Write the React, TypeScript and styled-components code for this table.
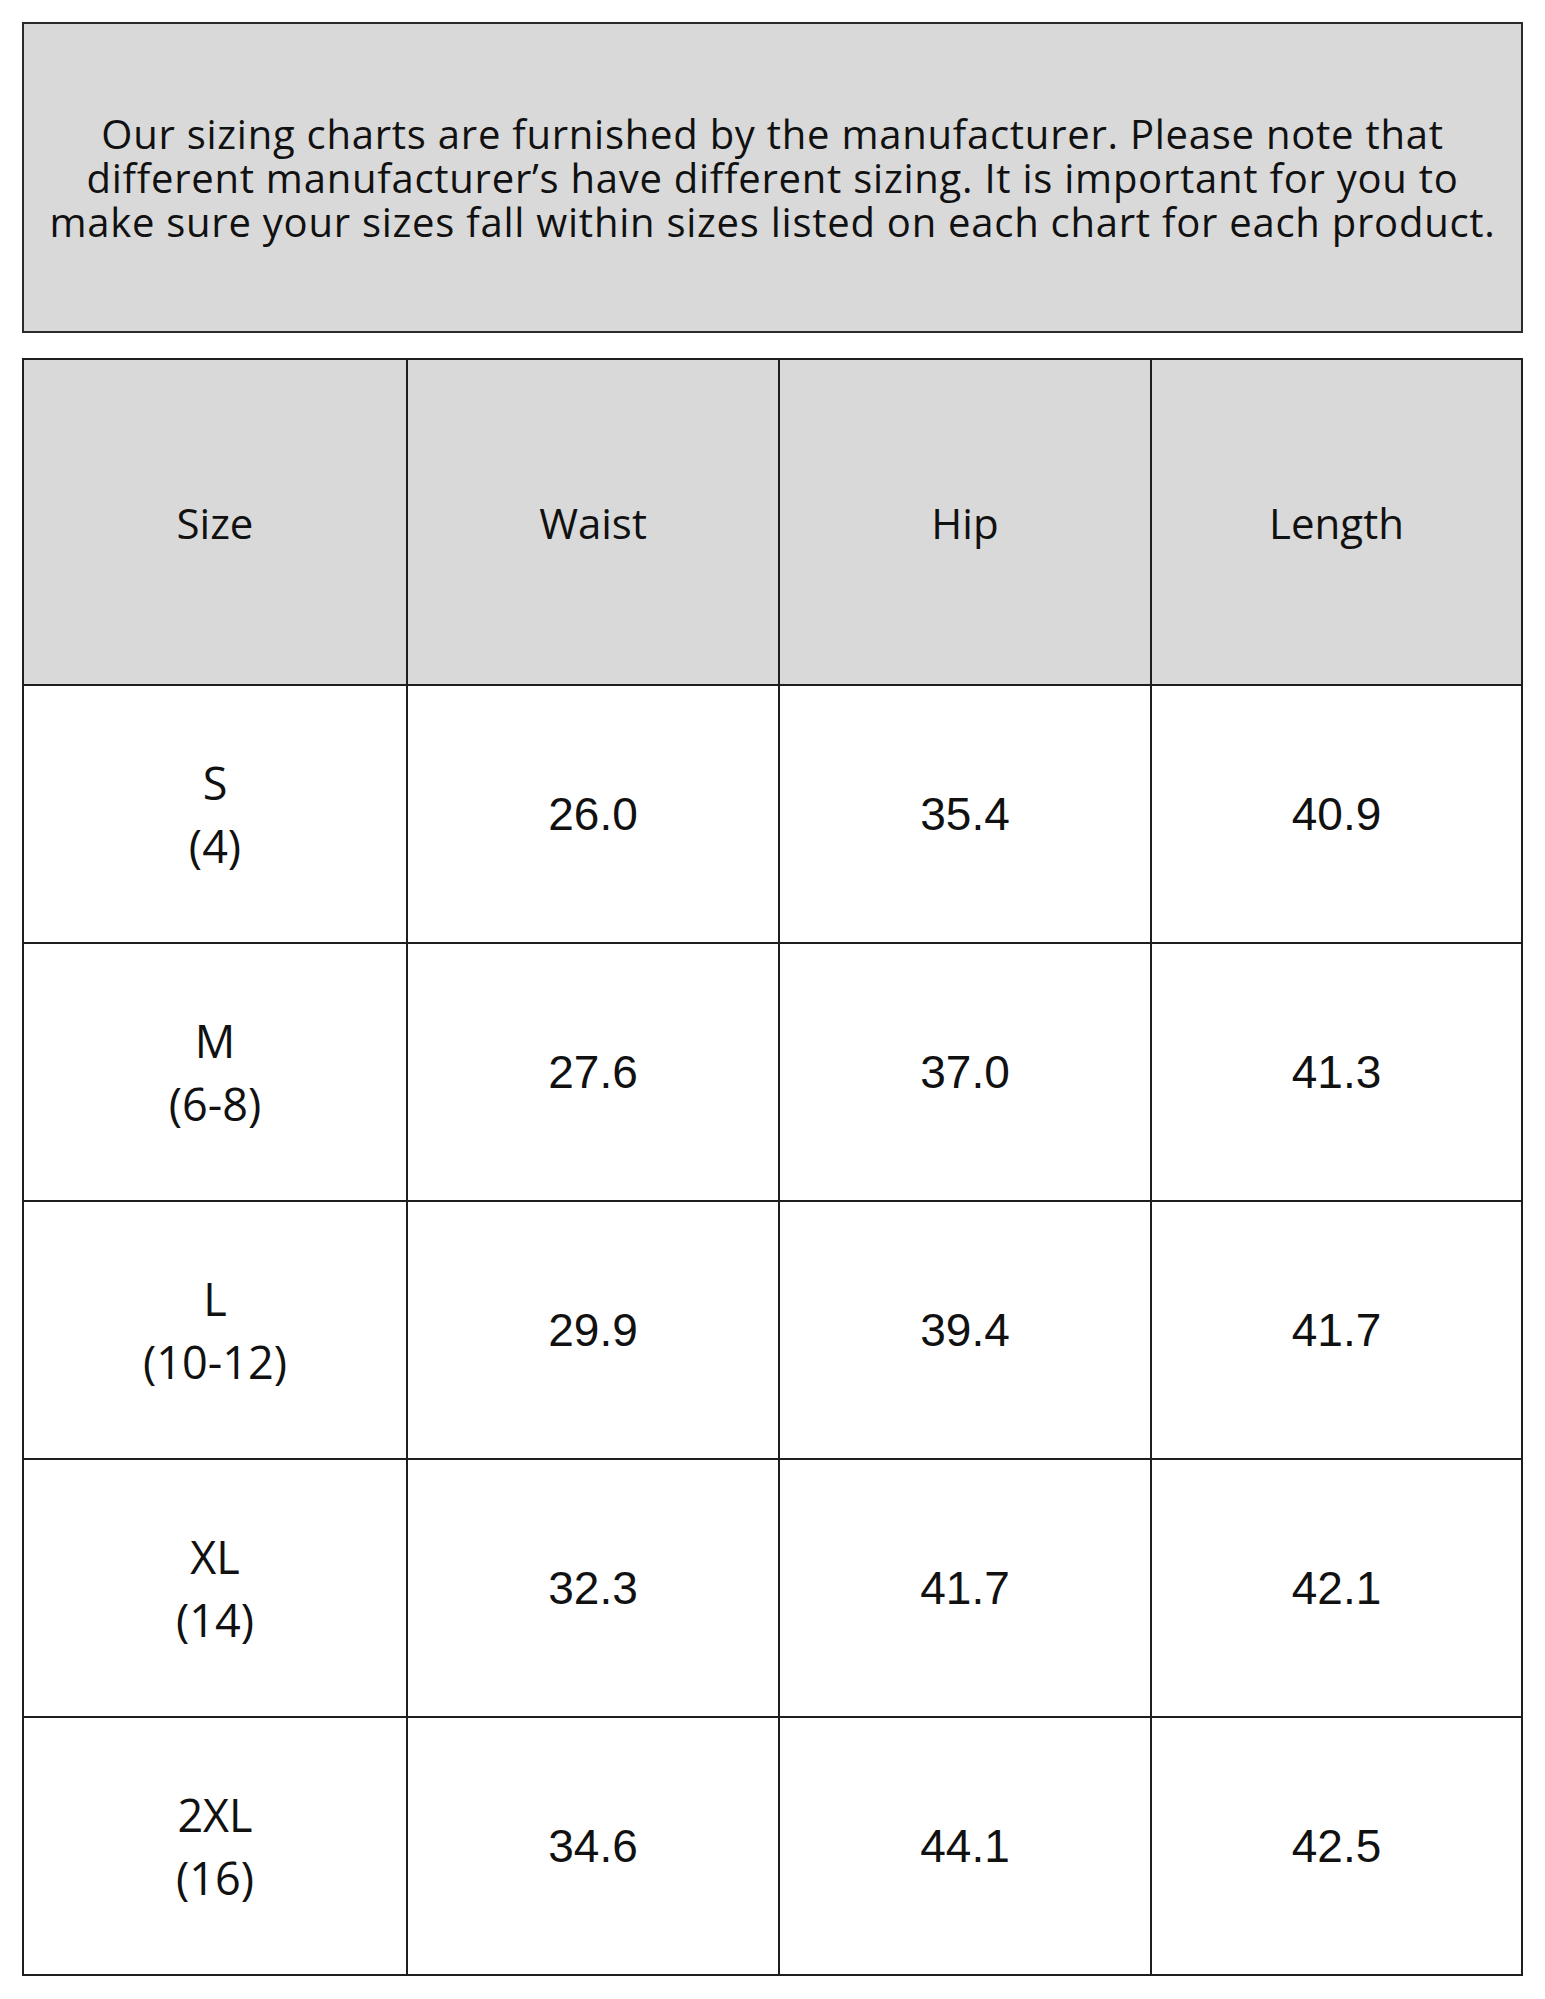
import React from 'react'
import styled, { createGlobalStyle } from 'styled-components'

const GlobalStyle = createGlobalStyle`
  html, body {
    margin: 0;
    padding: 0;
    background: #ffffff;
  }
`

const Page = styled.div`
  width: 1545px;
  padding: 22px;
  box-sizing: border-box;
  display: flex;
  flex-direction: column;
  gap: 25px;
`

const Notice = styled.div`
  height: 311px;
  box-sizing: border-box;
  border: 2px solid #2b2b2b;
  background: #d9d9d9;
  display: flex;
  align-items: center;
  justify-content: center;
  text-align: center;
  color: #111;
`

const NoticeText = styled.p`
  margin: 0;
  font-family: 'Open Sans', sans-serif;
  font-size: 40px;
  line-height: 44px;
  letter-spacing: 0.75px;
`

const Table = styled.div`
  display: grid;
  grid-template-columns: 382px 370px 370px 369px;
  grid-template-rows: 324px repeat(5, 256px);
  gap: 2px;
  background: #1e1e1e;
  border: 2px solid #1e1e1e;
  width: 1501px;
  box-sizing: border-box;
`

const Cell = styled.div<{ $head?: boolean }>`
  background: ${(p) => (p.$head ? '#d9d9d9' : '#ffffff')};
  display: flex;
  flex-direction: column;
  align-items: center;
  justify-content: center;
  color: #111;
`

const Label = styled.span<{ $head?: boolean }>`
  font-family: 'Open Sans', sans-serif;
  font-size: ${(p) => (p.$head ? '42px' : '45px')};
  line-height: 63px;
`

const Value = styled.span`
  font-family: 'Liberation Sans', Arial, sans-serif;
  font-size: 46px;
`

const heads = ['Size', 'Waist', 'Hip', 'Length']

const rows = [
  { size: 'S', alt: '(4)', vals: ['26.0', '35.4', '40.9'] },
  { size: 'M', alt: '(6-8)', vals: ['27.6', '37.0', '41.3'] },
  { size: 'L', alt: '(10-12)', vals: ['29.9', '39.4', '41.7'] },
  { size: 'XL', alt: '(14)', vals: ['32.3', '41.7', '42.1'] },
  { size: '2XL', alt: '(16)', vals: ['34.6', '44.1', '42.5'] },
]

export default function App() {
  return (
    <Page>
      <GlobalStyle />
      <Notice>
        <NoticeText>
          Our sizing charts are furnished by the manufacturer. Please note that
          <br />
          different manufacturer’s have different sizing. It is important for you to
          <br />
          make sure your sizes fall within sizes listed on each chart for each product.
        </NoticeText>
      </Notice>
      <Table>
        {heads.map((h) => (
          <Cell $head key={h}>
            <Label $head>{h}</Label>
          </Cell>
        ))}
        {rows.map((r) => (
          <React.Fragment key={r.size}>
            <Cell>
              <Label>{r.size}</Label>
              <Label>{r.alt}</Label>
            </Cell>
            {r.vals.map((v, i) => (
              <Cell key={i}>
                <Value>{v}</Value>
              </Cell>
            ))}
          </React.Fragment>
        ))}
      </Table>
    </Page>
  )
}
